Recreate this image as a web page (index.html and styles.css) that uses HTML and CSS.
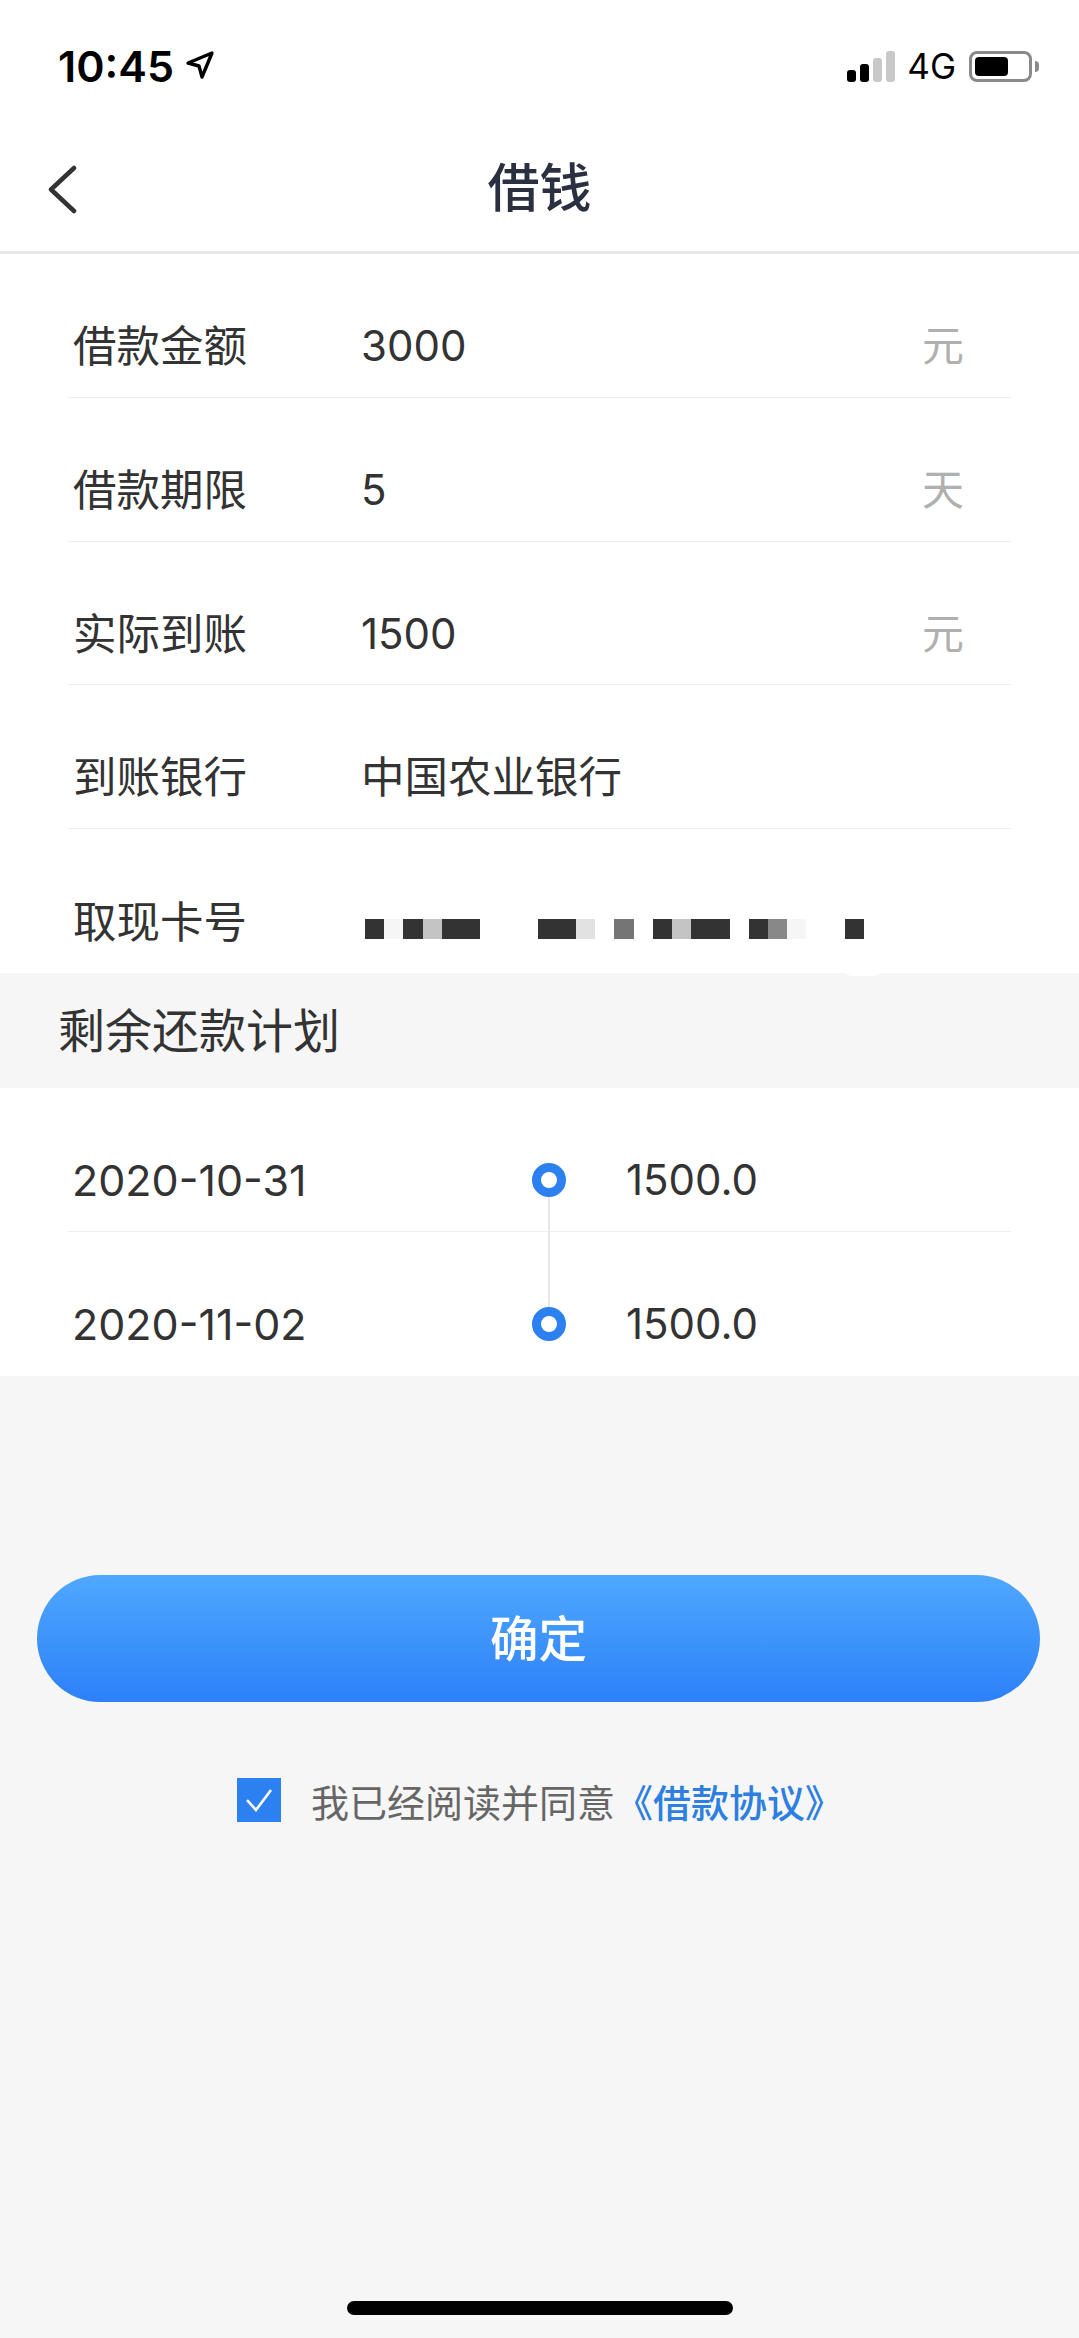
FILE: index.html
```html
<!DOCTYPE html>
<html lang="zh-CN">
<head>
    <meta charset="UTF-8">
    <meta name="viewport" content="width=device-width, initial-scale=1.0">
    <title>借钱</title>
    <link rel="stylesheet" href="styles.css">
</head>
<body>
    <div class="status-bar">
        <div class="status-left">
            <span class="time">10:45</span>
            <svg class="location" width="30" height="30" viewBox="0 0 30 30">
                <path d="M27 3 L3 13 L14 16 L17 27 Z" fill="none" stroke="#000" stroke-width="3.4" stroke-linejoin="round"/>
            </svg>
        </div>
        <div class="status-right">
            <div class="signal">
                <span class="bar bar-1"></span>
                <span class="bar bar-2"></span>
                <span class="bar bar-3 off"></span>
                <span class="bar bar-4 off"></span>
            </div>
            <span class="network">4G</span>
            <div class="battery"><div class="battery-level"></div></div>
            <div class="battery-nub"></div>
        </div>
    </div>

    <div class="nav">
        <svg class="back" width="30" height="50" viewBox="0 0 30 50">
            <path d="M26 3 L3 24.500 L26 46" fill="none" stroke="#333" stroke-width="4.500" stroke-linecap="round" stroke-linejoin="round"/>
        </svg>
        <h1 class="title">借钱</h1>
    </div>

    <div class="section">
        <div class="row">
            <span class="label">借款金额</span>
            <span class="value">3000</span>
            <span class="unit">元</span>
        </div>
        <div class="row">
            <span class="label">借款期限</span>
            <span class="value">5</span>
            <span class="unit">天</span>
        </div>
        <div class="row">
            <span class="label">实际到账</span>
            <span class="value">1500</span>
            <span class="unit">元</span>
        </div>
        <div class="row">
            <span class="label">到账银行</span>
            <span class="value value-cjk">中国农业银行</span>
        </div>
        <div class="row row-last">
            <span class="label">取现卡号</span>
            <div class="mosaic">
                <i class="px dark"></i><i class="px faint"></i><i class="px dark"></i><i class="px pale"></i><i class="px dark"></i><i class="px dark"></i>
                <i class="px"></i><i class="px"></i><i class="px"></i>
                <i class="px dark"></i><i class="px dark"></i><i class="px light"></i><i class="px"></i><i class="px mid"></i><i class="px"></i>
                <i class="px dark"></i><i class="px pale"></i><i class="px dark"></i><i class="px dark"></i><i class="px"></i>
                <i class="px dark"></i><i class="px soft"></i><i class="px faint"></i><i class="px"></i><i class="px"></i><i class="px dark"></i>
            </div>
        </div>
    </div>

    <div class="plan-title">剩余还款计划</div>

    <div class="section">
        <div class="row">
            <span class="date">2020-10-31</span>
            <span class="dot dot-first"></span>
            <span class="amount">1500.0</span>
        </div>
        <div class="row row-last">
            <span class="date">2020-11-02</span>
            <span class="dot"></span>
            <span class="amount">1500.0</span>
        </div>
    </div>

    <button class="confirm">确定</button>

    <div class="agree">
        <span class="checkbox">
            <svg width="44" height="44" viewBox="0 0 44 44">
                <path d="M10 22 L19 32 L34 12" fill="none" stroke="#fff" stroke-width="2.600"/>
            </svg>
        </span>
        <span class="agree-text">我已经阅读并同意<a class="agree-link">《借款协议》</a></span>
    </div>

    <div class="home-bar"></div>
</body>
</html>
```

FILE: styles.css
```css
* {
    box-sizing: border-box;
}
body {
    margin: 0;
    width: 1079px;
    height: 2338px;
    overflow: hidden;
    display: flex;
    flex-direction: column;
    background: #f6f6f6;
    color: #333;
    font-family: "Inter", "Noto Sans CJK SC", sans-serif;
}

/* status bar */
.status-bar {
    height: 120px;
    padding: 0 40px 0 58px;
    background: #fff;
    display: flex;
    justify-content: space-between;
}
.status-left {
    display: flex;
    align-items: center;
    gap: 11px;
    height: 132px;
}
.time {
    font-size: 43px;
    font-weight: 600;
    color: #000;
}
.location {
    margin-top: -2px;
}
.status-right {
    display: flex;
    align-items: center;
    height: 132px;
}
.signal {
    display: flex;
    align-items: flex-end;
    gap: 4px;
    height: 31px;
    margin-top: 1px;
}
.bar {
    width: 9px;
    border-radius: 3px;
    background: #000;
}
.bar.off {
    background: #c8c8c8;
}
.bar-1 {
    height: 12px;
}
.bar-2 {
    height: 18px;
}
.bar-3 {
    height: 24px;
}
.bar-4 {
    height: 31px;
}
.network {
    margin: 0 13px 0 12px;
    font-size: 35px;
    color: #000;
}
.battery {
    width: 63px;
    height: 31px;
    padding: 3px;
    border: 3px solid #8a8a8a;
    border-radius: 8px;
}
.battery-level {
    width: 33px;
    height: 100%;
    border-radius: 4px;
    background: #000;
}
.battery-nub {
    width: 4px;
    height: 11px;
    margin-left: 3px;
    border-radius: 0 4px 4px 0;
    background: #8a8a8a;
}

/* nav */
.nav {
    position: relative;
    height: 134px;
    padding-top: 8px;
    background: #fff;
    border-bottom: 3px solid #e8e8e9;
    display: flex;
    justify-content: center;
    align-items: center;
}
.back {
    position: absolute;
    left: 48px;
    top: 45px;
}
.title {
    margin: 0;
    font-size: 52px;
    font-weight: 500;
    line-height: 1.2;
    color: #2b3040;
}

/* rows */
.section {
    padding: 0 68px;
    background: #fff;
}
.row {
    height: 143.800px;
    padding: 62px 0 21px 5px;
    display: flex;
    align-items: center;
    border-bottom: 1px solid #eee;
    font-size: 43.500px;
    line-height: 60px;
}
.row-last {
    border-bottom: none;
}
.label {
    width: 288px;
    flex-shrink: 0;
}
.value {
    flex: 1;
    font-size: 42px;
}
.value-cjk {
    font-size: 43.500px;
}
.unit {
    width: 89px;
    font-size: 42px;
    color: #b0b0b0;
}

/* blurred card number */
.mosaic {
    position: relative;
    display: flex;
    margin: 14px 0 0 4px;
}
.mosaic::after {
    content: "";
    position: absolute;
    left: 477px;
    top: 47px;
    width: 42px;
    height: 10px;
    border-radius: 0 0 14px 14px;
    background: #fff;
}
.px {
    display: block;
    width: 19.200px;
    height: 20px;
}
.px.dark {
    background: #333;
}
.px.mid {
    background: #757575;
}
.px.soft {
    background: #888;
}
.px.pale {
    background: #c4c4c4;
}
.px.light {
    background: #e2e2e2;
}
.px.faint {
    background: #f6f6f6;
}

.plan-title {
    height: 115px;
    padding-left: 58px;
    font-size: 47px;
    line-height: 115px;
    color: #333;
}

/* repayment timeline */
.date {
    width: 460px;
    flex-shrink: 0;
    margin-left: -1px;
    font-size: 43px;
}
.dot {
    position: relative;
    width: 34px;
    height: 34px;
    flex-shrink: 0;
    border: 9px solid #2d80f0;
    border-radius: 50%;
    background: #fff;
}
.dot-first::after {
    content: "";
    position: absolute;
    left: 7px;
    top: 25px;
    width: 2px;
    height: 110px;
    background: #e8e8e8;
}
.amount {
    margin-left: 60px;
    font-size: 42px;
}

/* bottom */
.confirm {
    width: 1003px;
    height: 127px;
    margin: 199px 0 0 37px;
    padding-bottom: 5px;
    border: none;
    border-radius: 64px;
    background: linear-gradient(to bottom, #4fa8fe, #2d80f8);
    color: #fff;
    font-family: inherit;
    font-size: 48.500px;
    font-weight: 500;
}
.agree {
    margin-top: 71px;
    padding-left: 237px;
    display: flex;
    align-items: center;
    gap: 30px;
}
.checkbox {
    width: 44px;
    height: 44px;
    background: #2d80f0;
}
.checkbox svg {
    display: block;
}
.agree-text {
    font-size: 38px;
    color: #666;
}
.agree-link {
    color: #2d7fe0;
    font-weight: 500;
}
.home-bar {
    width: 386px;
    height: 14px;
    margin: auto 0 23px 347px;
    border-radius: 7px;
    background: #000;
}
```
